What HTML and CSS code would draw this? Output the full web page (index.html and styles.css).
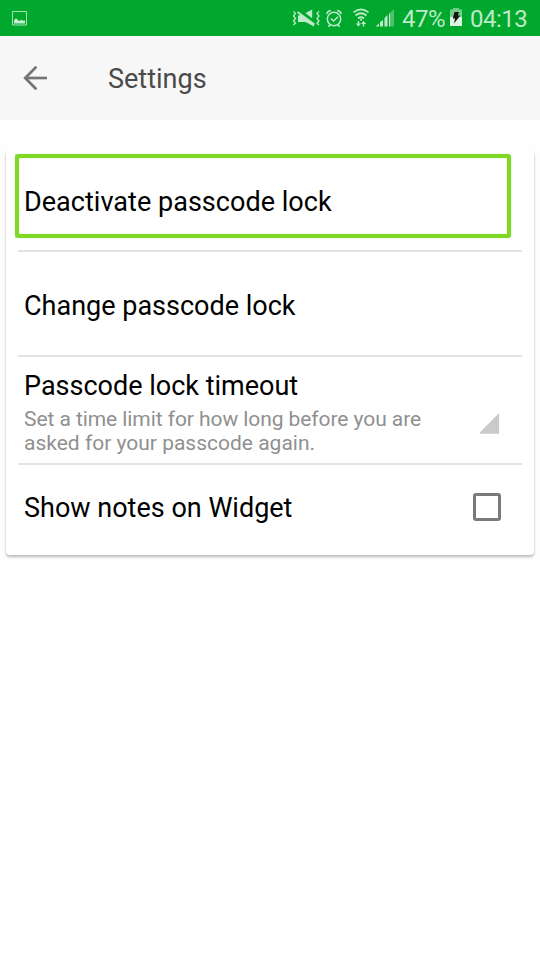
FILE: index.html
```html
<!DOCTYPE html>
<html lang="en">
<head>
<meta charset="utf-8">
<title>Settings</title>
<link rel="stylesheet" href="styles.css">
</head>
<body>
<div class="status">
  <svg class="picture" width="16" height="15" viewBox="0 0 16 15"><path d="M.5.5h14v13.500h-14z" fill="none" stroke="#a6e0b3"/><path d="M2 12.500V9.200l2-2 2 2 1.500.8 2-1.200 1.500 1 2-.4v3.100z" fill="#c8ecd0"/></svg>
  <svg class="icons" width="110" height="24" viewBox="292 6 110 24" fill="none" stroke="#bdeac8">
    <path d="M293.500 11.500l2 2-2 2.500 2 2.500-2 2.500 2 2-2 2M319 11.500l-2 2 2 2.500-2 2.500 2 2.500-2 2 2 2" stroke-width="1.300"/>
    <path d="M298 15.200h3.500l12.500 8.800v2.500l-8.500-4.500h-7.500zM305.500 13l6.700-3.500v9z" fill="#bdeac8" stroke="none"/>
    <path d="M297.500 12l17 12.500" stroke-width="1.800"/>
    <circle cx="334" cy="19" r="6.700" stroke-width="1.500"/>
    <path d="M330.800 18.500l2.700 2.500 4.500-4.200M326.800 14q.5-3 4-3.500M341.200 14q-.5-3-4-3.500M330 24.500l-1.500 2.300M338 24.500l1.500 2.300" stroke-width="1.500"/>
    <path d="M353.500 12.300q7.500-6 15 0M355.500 15.500q5.500-4.500 11 0M358 18.500q3-2.500 6 0" stroke-width="1.700"/>
    <path d="M358.500 21v3M363.500 26.500v-3" stroke-width="1.500"/>
    <path d="M355.800 23.500h5.200l-2.600 3zM361 24h5.200l-2.600-3zM360 19h2v1.500h-2z" fill="#bdeac8" stroke="none"/>
    <path d="M375.500 26.500l3.500-3v3zM380 22l3-2v6.500h-3zM384.500 18l3-3v11.500h-3z" fill="#bdeac8" stroke="none"/>
    <path d="M389 14l1.500-1.500v14H389z" fill="#bdeac8" stroke="none"/>
    <path d="M390.500 12.500l3.500-3.500v17.500h-3.500z" fill="#50c06b" stroke="none"/>
  </svg>
  <span class="percent">47%</span>
  <svg class="battery" width="12" height="18" viewBox="0 0 12 18"><path d="M0 1.500h3V0h6v1.500h3V9H0z" fill="#75cd8b"/><path d="M0 9h12v9H0z" fill="#dff5e4"/><path d="M4.500 4H9L7.800 7.500h2.500L4 15.500l1-5H2.800z" fill="#10150f"/></svg>
  <span class="clock">04:13</span>
</div>
<header class="toolbar">
  <svg class="back" width="26" height="26" viewBox="0 0 26 26" fill="none" stroke="#757575" stroke-width="2.700"><path d="M24 13H2.500"/><path d="M12.600 2.500L2.200 13l10.400 10.500" stroke-linecap="round"/></svg>
  <h1>Settings</h1>
</header>
<main class="card">
  <div class="row first"><div class="focus"><span class="label deactivate">Deactivate passcode lock</span></div></div>
  <div class="row change"><span class="label">Change passcode lock</span></div>
  <div class="row timeout">
    <div class="copy"><span class="label">Passcode lock timeout</span><p><span class="lead">Set a time limit for how long before you are</span><br>asked for your passcode again.</p></div>
    <svg class="corner" width="20" height="21" viewBox="0 0 20 21"><path d="M19.100 0v20.800H0v-1.500z" fill="#cacaca"/></svg>
  </div>
  <div class="row widget"><span class="label">Show notes on Widget</span><span class="checkbox"></span></div>
</main>
</body>
</html>
```

FILE: styles.css
```css
* { box-sizing: border-box; }
body {
  margin: 0;
  height: 960px;
  overflow: hidden;
  background: #fefefe;
  font-family: Roboto, sans-serif;
  color: #000;
}
svg { display: block; flex: none; }
.status {
  height: 36px;
  display: flex;
  align-items: flex-start;
  background: #00a82d;
  color: #bdeac8;
  font-size: 24px;
  line-height: 28px;
  letter-spacing: -.5px;
  white-space: nowrap;
}
.picture { margin: 11px 0 0 12px; }
.icons { margin: 6px 0 0 264px; }
.percent { width: 48px; padding-top: 5px; }
.battery { margin-top: 8px; }
.clock { margin-left: 8px; padding-top: 5px; }
.toolbar {
  height: 84px;
  display: flex;
  align-items: center;
  padding-left: 23px;
  background: #f7f7f7;
}
h1 {
  margin: 2px 0 0 59px;
  font-size: 27px;
  line-height: 32px;
  font-weight: 400;
  color: #4a4a4a;
}
.card {
  margin: 30px 6px 0;
  height: 405px;
  padding: 0 12px;
  border-radius: 4px;
  background: #fff;
  box-shadow: 0 2px 3px rgba(0, 0, 0, .28);
}
.row {
  display: flex;
  align-items: center;
  padding-left: 6px;
  border-bottom: 2px solid #e3e3e3;
}
.label {
  display: block;
  font-size: 27px;
  line-height: 32px;
  white-space: nowrap;
}
.first { height: 102px; padding: 4px 0 0; align-items: flex-start; }
.focus {
  width: 496px;
  height: 84px;
  flex: none;
  margin-left: -3px;
  border: 4px solid #80d826;
  border-radius: 3px;
  box-shadow: 0 0 1px #80d826, inset 0 0 1px #80d826;
}
.deactivate { padding: 28px 0 0 5px; letter-spacing: .03px; }
.change { height: 105px; padding-top: 4px; }
.timeout { height: 108px; align-items: flex-start; padding-top: 13px; }
.copy { width: 456px; }
p {
  margin: 5px 0 0;
  font-size: 21px;
  line-height: 24px;
  color: #909090;
  white-space: nowrap;
}
.lead { letter-spacing: -.07px; }
.corner { margin-top: 43px; }
.widget { height: 90px; border: 0; }
.widget .label { margin-top: -4px; width: 449px; }
.checkbox {
  width: 28px;
  height: 28px;
  margin-top: -7px;
  border: 3px solid #7a7a7a;
  border-radius: 3px;
}
```
